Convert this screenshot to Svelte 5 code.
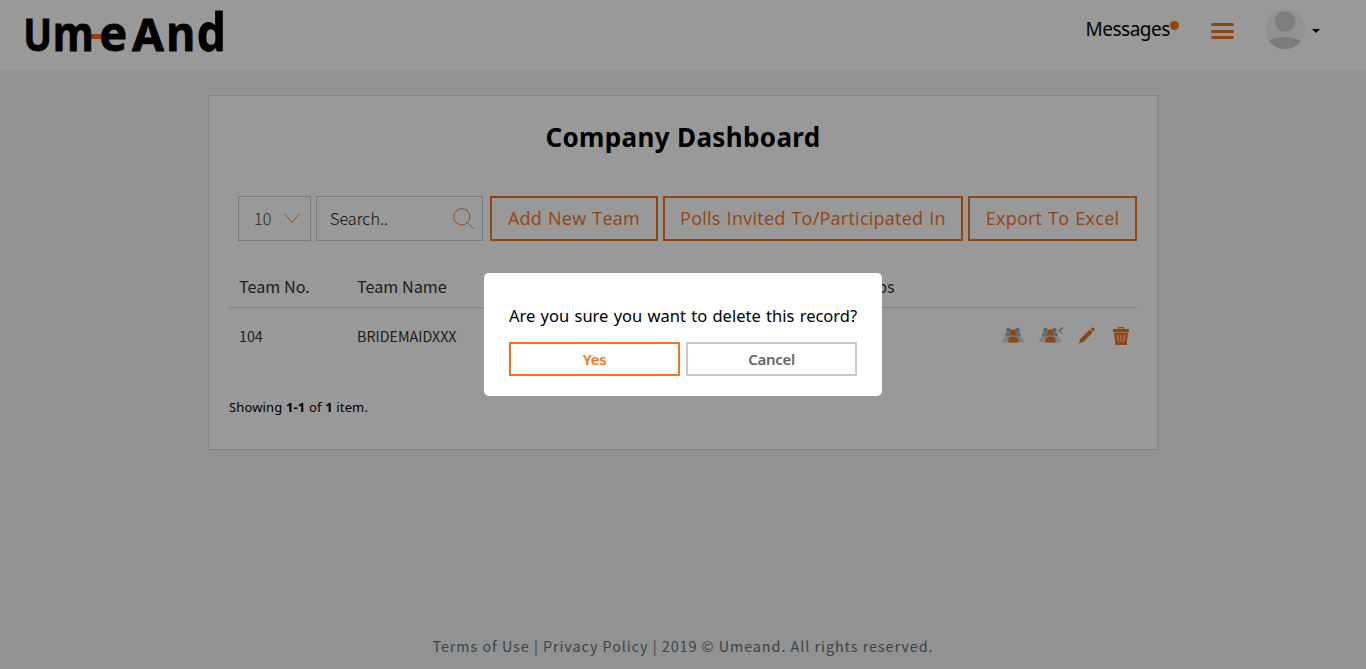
<script>
  const logo = [
    { c: 'U', x: 23.2, w: 28.8, s: 45 },
    { c: 'm', x: 52.8, w: 41, s: 49 },
    { c: 'e', x: 99.2, w: 28, s: 49 },
    { c: 'A', x: 132, w: 32, s: 45 },
    { c: 'n', x: 166.2, w: 29, s: 49 },
    { c: 'd', x: 196.8, w: 29, s: 51.5 }
  ];
  const buttons = [
    { label: 'Add New Team', cls: 'add' },
    { label: 'Polls Invited To/Participated In', cls: 'polls' },
    { label: 'Export To Excel', cls: 'export' }
  ];
</script>

{#snippet people()}
  <path d="M0 15.500q.5-4.500 3.500-6h15q3 1.500 3.500 6z" fill="#d2d9de" />
  <path d="M3 9.500V8q0-2.500 2.500-2.500h11q2.500 0 2.500 2.500v1.500z" fill="#a5b1ba" />
  <circle cx="6.500" cy="3" r="2.300" fill="#95a4af" /><circle cx="15.500" cy="3" r="2.300" fill="#95a4af" />
  <circle cx="11.300" cy="5.300" r="3" fill="#f37321" />
  <path d="M6.200 15.500v-1.700q.3-4 3.400-4h3.500q3 0 3.400 4v1.700z" fill="#f37321" />
{/snippet}

<div class="page">
  <header>
    <svg class="logo" width="240" height="70" viewBox="0 0 240 70">
      <path d="M91 36.500h11" stroke="#f37321" stroke-width="5" />
      {#each logo as l}
        <text x={l.x} y="50.600" font-size={l.s} textLength={l.w} lengthAdjust="spacingAndGlyphs">{l.c}</text>
      {/each}
    </svg>
    <nav>
      <span class="messages">Messages<i></i></span>
      <div class="burger"><b></b><b></b><b></b></div>
      <svg class="avatar" width="40" height="40" viewBox="0 0 40 40">
        <defs><clipPath id="round"><circle cx="20" cy="20" r="20" /></clipPath></defs>
        <g clip-path="url(#round)">
          <path d="M0 0h40v40H0z" fill="#f3f3f3" />
          <circle cx="20" cy="12.5" r="10.3" fill="#d2d2d2" />
          <ellipse cx="20" cy="38" rx="20" ry="10" fill="#cdcdcd" />
        </g>
      </svg>
      <span class="caret"></span>
    </nav>
  </header>

  <main>
    <h1><span>Company Dashboard</span></h1>
    <div class="tools">
      <div class="select"><span>10</span>
        <svg width="16" height="11" viewBox="0 0 16 11"><path d="M.6.6 8 9.8 15.4.6" fill="none" stroke="#f37321" stroke-width=".9" /></svg>
      </div>
      <div class="search"><span>Search..</span>
        <svg width="21" height="21" viewBox="0 0 21 21" fill="none" stroke="#f37321" stroke-width=".9"><circle cx="8.8" cy="8.8" r="8.1" /><path d="m14.6 14.6 5.8 5.8" /></svg>
      </div>
      {#each buttons as b}
        <button class={b.cls}><span>{b.label}</span></button>
      {/each}
    </div>
    <div class="row head">
      <span class="no">Team No.</span><span class="name">Team Name</span><span class="groups">Groups</span>
    </div>
    <div class="row body">
      <span class="no">104</span><span class="name team">BRIDEMAIDXXX</span>
      <div class="actions">
        <svg width="22" height="17" viewBox="0 0 22 17">{@render people()}</svg>
        <svg class="share" width="25" height="17" viewBox="0 0 25 17">{@render people()}
          <path d="m19.500 4.200 4.500-3.700" stroke="#f37321" stroke-width="1.200" /><path d="m20 4 3.500 2.500" stroke="#b3bec6" stroke-width="1.200" />
        </svg>
        <svg class="pencil" width="18" height="18" viewBox="0 0 18 18" fill="#f37321"><path d="m.500 16.700 2-5L11.700 2.500l3 3L5.500 14.700zM12.500 1.700q2-2 3.500-.8t.2 3.200l-.7.7-3-3z" /></svg>
        <svg class="trash" width="16" height="18" viewBox="0 0 16 18"><path d="M5.500 2V.7h5V2" fill="none" stroke="#f37321" stroke-width="1.200" /><path d="M0 2h16v3.300H0zM1 5.800h14l-1.400 12.200H2.400z" fill="#f37321" /><path d="m4.500 8 .8 7M8 8v7m3.500-7-.8 7" stroke="#fff" stroke-width=".9" /></svg>
      </div>
    </div>
    <p class="summary">Showing <b>1-1</b> of <b>1</b> item.</p>
  </main>

  <footer><span>Terms of Use | Privacy Policy | 2019 © Umeand. All rights reserved.</span></footer>
</div>

<div class="overlay">
  <div class="dialog">
    <p>Are you sure you want to delete this record?</p>
    <div class="choices"><button class="yes">Yes</button><button class="cancel">Cancel</button></div>
  </div>
</div>

<style>
  :global(body) { margin: 0; background: #f3f3f3; overflow: hidden; }
  .page { height: 669px; display: flex; flex-direction: column; font-family: "Noto Sans", sans-serif; color: #000; background: #f3f3f3; white-space: nowrap; }
  header { height: 70px; flex: none; background: #fff; display: flex; justify-content: space-between; align-items: flex-start; }
  .logo { font-family: "Noto Sans", sans-serif; font-weight: 700; fill: #000; overflow: visible; }
  .logo text { stroke: #000; stroke-width: .8; }
  nav { display: flex; padding-right: 46px; align-items: flex-start; }
  .messages { font-size: 19px; line-height: 26px; margin-top: 16px; width: 125.5px; letter-spacing: -.5px; display: flex; }
  .messages i { width: 9px; height: 9px; border-radius: 50%; background: #f37321; margin-top: 5px; }
  .burger { width: 23px; display: grid; gap: 3.5px; margin-top: 23px; }
  .burger b { height: 3px; border-radius: 2px; background: #f37321; }
  .avatar { margin: 9px 0 0 31px; }
  .caret { border: 4px solid transparent; border-top-color: #000; border-bottom: 0; margin: 29px 0 0 7px; }
  main { box-sizing: border-box; width: 950px; height: 355px; flex: none; margin: 25px 0 0 208px; border: 1px solid #ddd; background: #fff; padding: 0 20px; }
  h1 { margin: 21px 0 0; height: 40px; line-height: 40px; font-size: 26px; letter-spacing: .35px; text-align: center; font-weight: 700; }
  .tools { display: flex; height: 45px; margin: 39px 0 0 9px; }
  .tools > * { box-sizing: border-box; height: 45px; flex: none; }
  .select, .search { border: 1px solid #c3ccd3; display: flex; align-items: center; justify-content: space-between; font-family: "Noto Sans CJK SC", sans-serif; font-size: 16.2px; }
  .select { width: 73px; padding: 0 10px 0 15px; color: #444; font-weight: 300; margin-right: 5px; }
  .search { width: 167px; padding: 0 8px 0 13px; font-weight: 300; color: #111; margin-right: 7px; }
  .select span, .search span { padding-bottom: 1px; }
  button { background: transparent; border: 2px solid #f37321; color: #f37321; padding: 0; font-family: "Noto Sans", sans-serif; }
  .tools button { font-family: "Open Sans", sans-serif; font-size: 18px; line-height: 41px; letter-spacing: .25px; word-spacing: 1px; }
  .add { width: 168px; margin-right: 5px; }
  .polls { width: 300px; margin-right: 5px; }
  .export { width: 169px; }
  .row { display: flex; padding-left: 10px; font-family: "Noto Sans CJK SC", sans-serif; color: #333; }
  .head { height: 40px; line-height: 38px; margin-top: 26px; border-bottom: 1px solid #ddd; font-size: 16.2px; }
  .no { width: 118px; flex: none; }
  .head .name { width: 483px; }
  .body { height: 57px; line-height: 55px; font-size: 14.3px; }
  .body .name { width: 645px; }
  .actions { display: flex; height: 55px; align-items: center; }
  .share { margin-left: 15px; }
  .pencil { margin-left: 14px; }
  .trash { margin-left: 17px; }
  .summary { margin: 32px 0 0; font-size: 13px; line-height: 20px; letter-spacing: .15px; }
  footer { margin-top: auto; padding-bottom: 11px; text-align: center; font-family: "Noto Sans CJK SC", sans-serif; font-size: 14.3px; line-height: 24px; letter-spacing: .98px; color: #60707c; }
  .overlay { position: fixed; inset: 0; background: rgba(0, 0, 0, .4); display: flex; align-items: center; justify-content: center; font-family: "Noto Sans", sans-serif; }
  .dialog { box-sizing: border-box; width: 398px; height: 123px; background: #fff; border-radius: 5px; padding: 30px 25px 20px; white-space: nowrap; }
  .dialog p { margin: 0 0 13px; font-size: 16.5px; line-height: 26px; word-spacing: 1px; }
  .choices { display: flex; gap: 6px; }
  .choices button { box-sizing: border-box; width: 171px; height: 34px; font-size: 15px; font-weight: 600; letter-spacing: -.3px; }
  .choices .cancel { color: #666; border-color: #c3ccd3; }
</style>
